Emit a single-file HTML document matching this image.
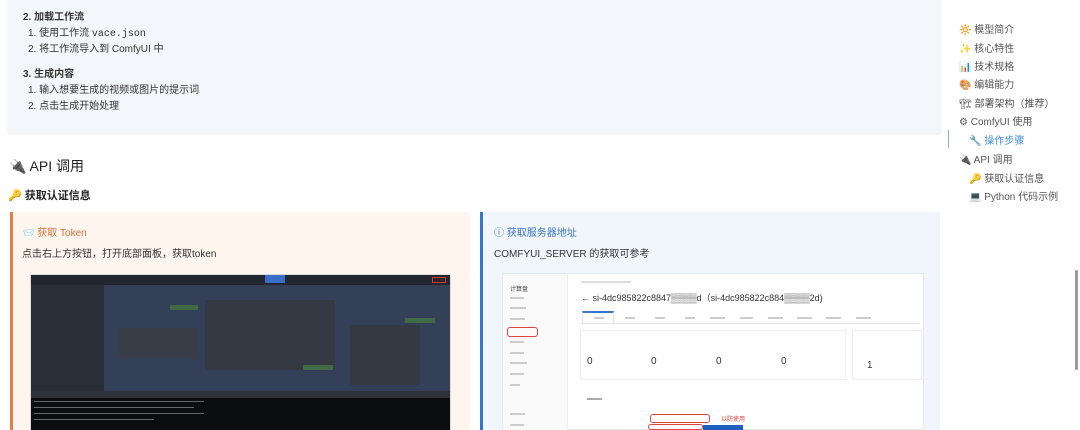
<!DOCTYPE html>
<html><head><meta charset="utf-8">
<style>
*{margin:0;padding:0;box-sizing:border-box}
body{width:1080px;height:430px;overflow:hidden;background:#fff;font-family:"Liberation Sans","Noto Sans CJK SC",sans-serif;color:#333;position:relative}
.a{position:absolute;white-space:nowrap}
.t{font-size:10px;color:#333}
.toc{font-size:10px;color:#555}
.k{position:absolute;background:#3a3f4a}
.s{position:absolute;font-size:5px;color:#888;white-space:nowrap}
.ln{position:absolute;height:2px;background:#ccc}
</style></head><body>
<div class="a" style="left:8px;top:0;width:933px;height:133px;background:#f3f6fa;box-shadow:0 1px 2px rgba(0,0,0,.08)"></div>
<div class="a t" style="left:23px;top:8px;font-weight:bold">2. 加载工作流</div>
<div class="a t" style="left:28px;top:24px">1. 使用工作流 <span style="font-family:'Liberation Mono',monospace">vace.json</span></div>
<div class="a t" style="left:28px;top:40px">2. 将工作流导入到 ComfyUI 中</div>
<div class="a t" style="left:23px;top:65px;font-weight:bold">3. 生成内容</div>
<div class="a t" style="left:28px;top:81px">1. 输入想要生成的视频或图片的提示词</div>
<div class="a t" style="left:28px;top:97px">2. 点击生成开始处理</div>

<div class="a" style="left:9px;top:156px;font-size:14px;color:#222">🔌 API 调用</div>
<div class="a" style="left:8px;top:187px;font-size:11px;font-weight:bold;color:#222">🔑 获取认证信息</div>

<!-- left card -->
<div class="a" style="left:10px;top:212px;width:460px;height:218px;background:#fdf5ee;border-left:3px solid #e07f4e"></div>
<div class="a" style="left:22px;top:224px;font-size:10px;color:#d9733b">📨 获取 Token</div>
<div class="a t" style="left:22px;top:245px">点击右上方按钮，打开底部面板，获取token</div>
<div class="a" style="left:30px;top:274px;width:421px;height:156px;background:#2e3442;border:1px solid #ddd"></div>
<div class="k" style="left:31px;top:275px;width:419px;height:10px;background:#22262e"></div>
<div class="k" style="left:31px;top:285px;width:73px;height:106px;background:#2a2e36"></div>
<div class="k" style="left:104px;top:285px;width:346px;height:106px;background:#334058"></div>
<div class="k" style="left:118px;top:328px;width:80px;height:30px;background:#3a3e48"></div>
<div class="k" style="left:205px;top:300px;width:130px;height:70px;background:#353944"></div>
<div class="k" style="left:350px;top:325px;width:70px;height:60px;background:#353944"></div>
<div class="a" style="left:170px;top:305px;width:28px;height:5px;background:#3f6a44"></div>
<div class="a" style="left:303px;top:365px;width:30px;height:5px;background:#3f6a44"></div>
<div class="a" style="left:405px;top:318px;width:30px;height:5px;background:#3f6a44"></div>
<div class="a" style="left:265px;top:275px;width:20px;height:8px;background:#3a6fc7"></div>
<div class="a" style="left:432px;top:277px;width:14px;height:6px;border:1px solid #d33"></div>
<div class="k" style="left:31px;top:391px;width:419px;height:7px;background:#2d3138"></div>
<div class="k" style="left:31px;top:398px;width:419px;height:32px;background:#0c0d10"></div>
<div class="a" style="left:34px;top:401px;width:170px;height:1px;background:#666"></div>
<div class="a" style="left:34px;top:407px;width:160px;height:1px;background:#666"></div>
<div class="a" style="left:34px;top:413px;width:170px;height:1px;background:#666"></div>
<div class="a" style="left:34px;top:419px;width:120px;height:1px;background:#666"></div>

<!-- right card -->
<div class="a" style="left:480px;top:212px;width:460px;height:218px;background:#f1f6fc;border-left:3px solid #3b74c8"></div>
<div class="a" style="left:494px;top:224px;font-size:10px;color:#3b74c8">ⓘ 获取服务器地址</div>
<div class="a t" style="left:494px;top:245px">COMFYUI_SERVER 的获取可参考</div>
<div class="a" style="left:502px;top:273px;width:422px;height:157px;background:#fff;border:1px solid #e6e8eb"></div>
<div class="a" style="left:503px;top:274px;width:65px;height:156px;background:#fafafa;border-right:1px solid #eee"></div>
<div class="s" style="left:510px;top:284px;font-size:6px;color:#444">计算盘</div>
<div class="ln" style="left:510px;top:297px;width:14px"></div>
<div class="ln" style="left:510px;top:307px;width:16px"></div>
<div class="ln" style="left:510px;top:318px;width:15px"></div>
<div class="ln" style="left:510px;top:341px;width:14px"></div>
<div class="ln" style="left:510px;top:352px;width:14px"></div>
<div class="ln" style="left:510px;top:362px;width:17px"></div>
<div class="ln" style="left:510px;top:373px;width:14px"></div>
<div class="ln" style="left:510px;top:384px;width:10px"></div>
<div class="ln" style="left:510px;top:413px;width:15px"></div>
<div class="ln" style="left:510px;top:424px;width:14px"></div>
<div class="a" style="left:507px;top:327px;width:31px;height:10px;border:1px solid #d44;border-radius:3px"></div>
<div class="ln" style="left:581px;top:281px;width:50px;background:#ddd"></div>
<div class="a" style="left:581px;top:291px;font-size:9px;color:#333">← si-4dc985822c8847▒▒▒▒d（si-4dc985822c884▒▒▒▒2d)</div>
<div class="a" style="left:580px;top:311px;width:340px;height:13px;border-bottom:1px solid #e5e5e5"></div>
<div class="a" style="left:582px;top:311px;width:32px;height:13px;border-top:2px solid #3b74c8;border-left:1px solid #e5e5e5;border-right:1px solid #e5e5e5"></div>
<div class="ln" style="left:594px;top:317px;width:10px"></div>
<div class="ln" style="left:625px;top:317px;width:10px"></div>
<div class="ln" style="left:655px;top:317px;width:10px"></div>
<div class="ln" style="left:685px;top:317px;width:10px"></div>
<div class="ln" style="left:710px;top:317px;width:15px"></div>
<div class="ln" style="left:740px;top:317px;width:13px"></div>
<div class="ln" style="left:768px;top:317px;width:15px"></div>
<div class="ln" style="left:797px;top:317px;width:15px"></div>
<div class="ln" style="left:826px;top:317px;width:15px"></div>
<div class="ln" style="left:856px;top:317px;width:15px"></div>
<div class="a" style="left:580px;top:330px;width:266px;height:50px;border:1px solid #eee"></div>
<div class="a" style="left:852px;top:330px;width:70px;height:50px;border:1px solid #eee"></div>
<div class="a" style="left:587px;top:356px;font-size:10px;color:#333">0</div>
<div class="a" style="left:651px;top:356px;font-size:10px;color:#333">0</div>
<div class="a" style="left:716px;top:356px;font-size:10px;color:#333">0</div>
<div class="a" style="left:781px;top:356px;font-size:10px;color:#333">0</div>
<div class="a" style="left:867px;top:360px;font-size:10px;color:#333">1</div>
<div class="ln" style="left:587px;top:398px;width:15px;background:#aaa"></div>
<div class="a" style="left:650px;top:414px;width:60px;height:9px;border:1px solid #d44;border-radius:3px"></div>
<div class="a" style="left:648px;top:424px;width:55px;height:6px;border:1px solid #d44;border-radius:3px"></div>
<div class="a" style="left:703px;top:425px;width:40px;height:5px;background:#1f5fbf"></div>
<div class="s" style="left:721px;top:414px;color:#d44;font-size:6px">以防使用</div>

<!-- TOC -->
<div class="a toc" style="left:959px;top:21px">🔆 模型简介</div>
<div class="a toc" style="left:959px;top:40px">✨ 核心特性</div>
<div class="a toc" style="left:959px;top:58px">📊 技术规格</div>
<div class="a toc" style="left:959px;top:76px">🎨 编辑能力</div>
<div class="a toc" style="left:959px;top:95px">🏗 部署架构（推荐）</div>
<div class="a toc" style="left:959px;top:113px">⚙ ComfyUI 使用</div>
<div class="a toc" style="left:969px;top:132px;color:#4a8fe0">🔧 操作步骤</div>
<div class="a toc" style="left:959px;top:151px">🔌 API 调用</div>
<div class="a toc" style="left:969px;top:170px">🔑 获取认证信息</div>
<div class="a toc" style="left:969px;top:188px">💻 Python 代码示例</div>
<div class="a" style="left:948px;top:130px;width:1px;height:18px;background:#9ab"></div>
<div class="a" style="left:1075px;top:270px;width:3px;height:100px;background:#999;border-radius:2px"></div>
</body></html>
